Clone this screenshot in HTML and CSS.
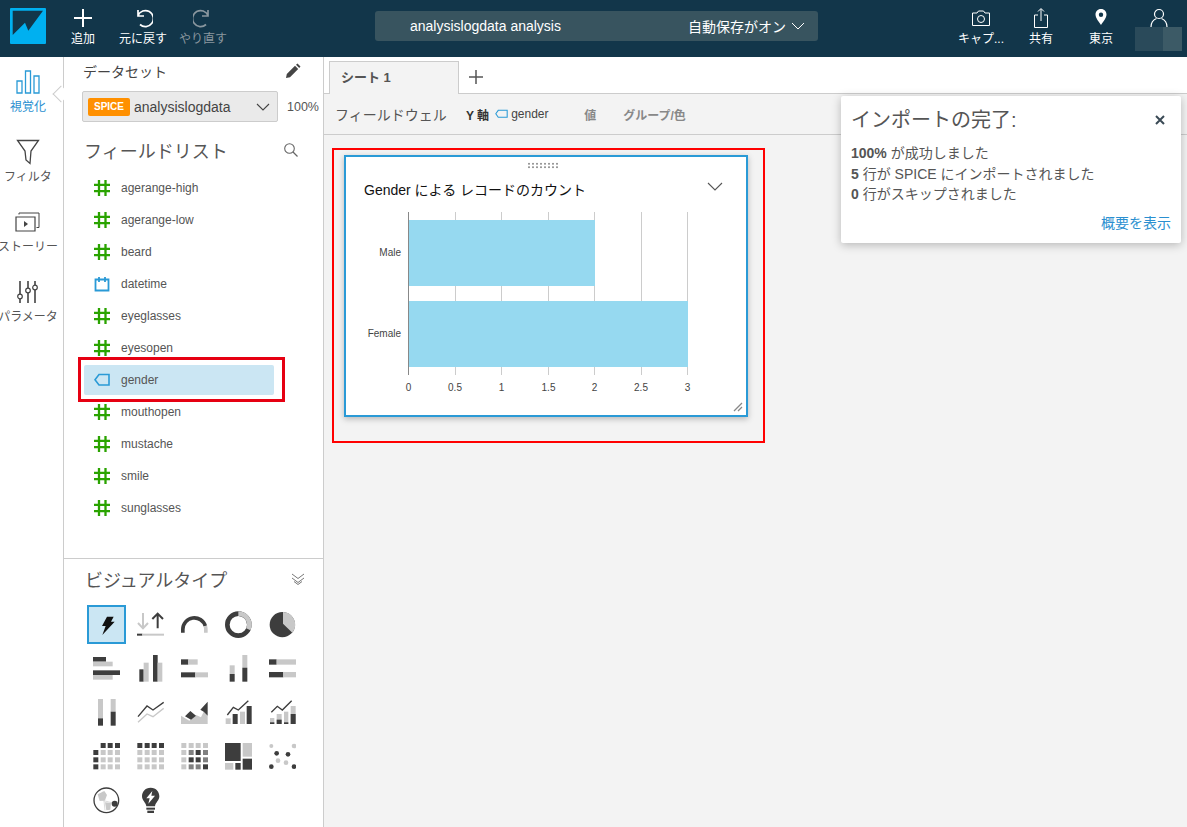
FILE: index.html
```html
<!DOCTYPE html>
<html lang="ja">
<head>
    <meta charset="UTF-8">
    <title>analysislogdata analysis</title>
    <link rel="stylesheet" href="styles.css">
</head>
<body>
    <header class="topbar">
        <div class="logo">
            <svg width="36" height="36" viewBox="0 0 36 36"><rect width="36" height="36" rx="1" fill="#00b0f0"/><path d="M2.700 2.700H33L18.300 22.700 15 14.700 2.700 27Z" fill="#12364a"/></svg>
        </div>
        <div class="tool">
            <svg width="20" height="20" viewBox="0 0 20 20"><path d="M10 1V19M1 10H19" stroke="#fff" stroke-width="2" fill="none"/></svg>
            <span>追加</span>
        </div>
        <div class="tool">
            <svg width="20" height="20" viewBox="0 0 20 20"><path d="M5 2V8H11M5 7.500A8 8 0 1 1 7 16.500" stroke="#fff" stroke-width="1.700" fill="none"/></svg>
            <span>元に戻す</span>
        </div>
        <div class="tool disabled">
            <svg width="20" height="20" viewBox="0 0 20 20"><path d="M15 2V8H9M15 7.500A8 8 0 1 0 13 16.500" stroke="#8a979f" stroke-width="1.700" fill="none"/></svg>
            <span>やり直す</span>
        </div>
        <div class="title-bar">
            <span class="title-name">analysislogdata analysis</span>
            <span class="title-save">自動保存がオン</span>
            <svg width="14" height="8" viewBox="0 0 14 8"><path d="M1 1L7 7 13 1" stroke="#fff" stroke-width="1" fill="none"/></svg>
        </div>
        <div class="tool tool-first">
            <svg width="20" height="20" viewBox="0 0 20 20"><path d="M1.500 5H6L7.500 3H12.500L14 5H18.500V17.500H1.500Z" stroke="#fff" stroke-width="1" fill="none"/><circle cx="10" cy="11" r="3.500" stroke="#fff" stroke-width="1" fill="none"/></svg>
            <span>キャプ...</span>
        </div>
        <div class="tool">
            <svg width="20" height="20" viewBox="0 0 20 20"><path d="M7 7H3.500V19.500H16.500V7H13M10 13V1M7 3.500L10 .5 13 3.500" stroke="#fff" stroke-width="1" fill="none"/></svg>
            <span>共有</span>
        </div>
        <div class="tool">
            <svg width="20" height="20" viewBox="0 0 20 20"><path fill-rule="evenodd" d="M10 1C6.500 1 4.500 3.500 4.500 6.500 4.500 10 8 14 10 17 12 14 15.500 10 15.500 6.500 15.500 3.500 13.500 1 10 1ZM10 4.500A2.200 2.200 0 1 1 10 8.900 2.200 2.200 0 0 1 10 4.500Z" fill="#fff"/></svg>
            <span>東京</span>
        </div>
        <div class="tool tool-user">
            <svg width="20" height="20" viewBox="0 0 20 20"><circle cx="10" cy="6" r="4.500" stroke="#fff" stroke-width="1.200" fill="none"/><path d="M2 19C2 14 5 11.500 7.500 10.500M18 19C18 14 15 11.500 12.500 10.500" stroke="#fff" stroke-width="1.200" fill="none"/></svg>
        </div>
        <div class="user-blur"></div>
    </header>

    <div class="page">
        <nav class="rail">
            <div class="rail-item active">
                <div class="rail-icon">
                    <svg width="26" height="24" viewBox="0 0 26 24"><path d="M2 11H7V23H2ZM10.500 1H15.500V23H10.500ZM19 6H24V23H19Z" stroke="#2a9ad6" stroke-width="1.300" fill="none"/></svg>
                </div>
                <span>視覚化</span>
            </div>
            <div class="rail-item">
                <div class="rail-icon">
                    <svg width="24" height="26" viewBox="0 0 24 26"><path d="M1.500 1.500H22.500L15 12 14 24.500 10 21 9 12Z" stroke="#444" stroke-width="1.300" fill="none"/></svg>
                </div>
                <span>フィルタ</span>
            </div>
            <div class="rail-item">
                <div class="rail-icon">
                    <svg width="26" height="22" viewBox="0 0 26 22"><path d="M1 6H20V20H1Z" stroke="#444" stroke-width="1.200" fill="none"/><path d="M4 3.500V2H24V16.500H21.500" stroke="#444" stroke-width="1" fill="none"/><path d="M9 10L13 13 9 16Z" fill="#444"/></svg>
                </div>
                <span>ストーリー</span>
            </div>
            <div class="rail-item">
                <div class="rail-icon">
                    <svg width="22" height="24" viewBox="0 0 22 24"><path d="M3 1V14M3 19V23M11 1V8M11 13V23M18 1V5M18 10V23" stroke="#444" stroke-width="1.600" fill="none"/><circle cx="3" cy="16.500" r="2.300" stroke="#444" stroke-width="1.200" fill="none"/><circle cx="11" cy="10.500" r="2.300" stroke="#444" stroke-width="1.200" fill="none"/><circle cx="18" cy="7.500" r="2.300" stroke="#444" stroke-width="1.200" fill="none"/></svg>
                </div>
                <span>パラメータ</span>
            </div>
        </nav>

        <aside class="sidebar">
            <div class="data-head">
                <span>データセット</span>
                <svg width="16" height="16" viewBox="0 0 16 16"><path d="M1 15L1.800 11 10 2.800 13.200 6 5 14.200ZM11 1.800L12.500 .5 15.500 3.500 14.200 5Z" fill="#444"/></svg>
            </div>
            <div class="data-row">
                <div class="data-select">
                    <span class="spice">SPICE</span>
                    <span class="data-name">analysislogdata</span>
                    <svg width="14" height="8" viewBox="0 0 14 8"><path d="M1 1L7 7 13 1" stroke="#444" stroke-width="1.100" fill="none"/></svg>
                </div>
                <span class="data-pct">100%</span>
            </div>
            <div class="section-head">
                <h2>フィールドリスト</h2>
                <svg class="search" width="16" height="16" viewBox="0 0 16 16"><circle cx="6.500" cy="6.500" r="4.800" stroke="#666" stroke-width="1.100" fill="none"/><path d="M10 10L14.500 14.500" stroke="#666" stroke-width="1.300"/></svg>
            </div>
            <ul class="fields">
                <li class="field"><svg width="16" height="16" viewBox="0 0 16 16"><use href="#hash"/></svg>agerange-high</li>
                <li class="field"><svg width="16" height="16" viewBox="0 0 16 16"><use href="#hash"/></svg>agerange-low</li>
                <li class="field"><svg width="16" height="16" viewBox="0 0 16 16"><use href="#hash"/></svg>beard</li>
                <li class="field"><svg width="16" height="16" viewBox="0 0 16 16"><path d="M1.500 3.500H14.500V14.500H1.500Z" stroke="#2a9ad6" stroke-width="1.800" fill="none"/><path d="M5 1V6M11 1V6" stroke="#2a9ad6" stroke-width="1.800"/></svg>datetime</li>
                <li class="field"><svg width="16" height="16" viewBox="0 0 16 16"><use href="#hash"/></svg>eyeglasses</li>
                <li class="field"><svg width="16" height="16" viewBox="0 0 16 16"><use href="#hash"/></svg>eyesopen</li>
                <li class="field selected"><svg width="16" height="16" viewBox="0 0 16 16"><use href="#tag"/></svg>gender</li>
                <li class="field"><svg width="16" height="16" viewBox="0 0 16 16"><use href="#hash"/></svg>mouthopen</li>
                <li class="field"><svg width="16" height="16" viewBox="0 0 16 16"><use href="#hash"/></svg>mustache</li>
                <li class="field"><svg width="16" height="16" viewBox="0 0 16 16"><use href="#hash"/></svg>smile</li>
                <li class="field"><svg width="16" height="16" viewBox="0 0 16 16"><use href="#hash"/></svg>sunglasses</li>
            </ul>

            <section class="visuals">
                <div class="visuals-head">
                    <h2>ビジュアルタイプ</h2>
                    <svg width="14" height="12" viewBox="0 0 14 12"><path d="M1 1L7 5.500 13 1M1 5L7 9.500 13 5M3 8.500L7 11.500 11 8.500" stroke="#777" stroke-width="1" fill="none"/></svg>
                </div>
                <div class="visual-grid">
                    <div class="visual picked"><svg viewBox="0 0 81 81"><path d="M42 17H62L54 32H65L28 72 38 45H27Z" fill="#111"/></svg></div>
                    <div class="visual"><svg viewBox="0 0 81 81"><path class="ln-lt" d="M18 6V52M3 36L18 52 33 36"/><path class="ln-dk" d="M62 52V8M46 24L62 8 78 24"/><rect class="dk" x="0" y="68" width="16" height="6"/><rect class="lt" x="16" y="68" width="66" height="6"/></svg></div>
                    <div class="visual"><svg viewBox="0 0 81 81"><path d="M5.500 65V55A34.500 34.500 0 0 1 73 45" fill="none" stroke="#3d3d3d" stroke-width="11"/><path d="M73 45A34.500 34.500 0 0 1 74.500 55V65" fill="none" stroke="#c8c8c8" stroke-width="11"/></svg></div>
                    <div class="visual"><svg viewBox="0 0 81 81"><circle cx="40" cy="41" r="33" fill="none" stroke="#3d3d3d" stroke-width="14"/><path d="M40 8A33 33 0 0 1 70 55" fill="none" stroke="#c8c8c8" stroke-width="14"/></svg></div>
                    <div class="visual"><svg viewBox="0 0 81 81"><circle cx="40" cy="41" r="38" fill="#3d3d3d"/><path d="M42 3A38 38 0 0 1 70 65L42 38Z" fill="#c8c8c8"/></svg></div>

                    <div class="visual"><svg viewBox="0 0 81 81"><rect class="dk" x="0" y="6" width="39" height="14"/><rect class="lt" x="0" y="20" width="59" height="14"/><rect class="dk" x="0" y="46" width="81" height="14"/><rect class="lt" x="0" y="60" width="59" height="14"/></svg></div>
                    <div class="visual"><svg viewBox="0 0 81 81"><rect class="dk" x="7" y="43" width="13" height="37"/><rect class="lt" x="20" y="23" width="15" height="57"/><rect class="dk" x="48" y="0" width="14" height="80"/><rect class="lt" x="62" y="23" width="14" height="57"/></svg></div>
                    <div class="visual"><svg viewBox="0 0 81 81"><rect class="dk" x="0" y="13" width="22" height="16"/><rect class="lt" x="22" y="13" width="28" height="16"/><rect class="dk" x="0" y="52" width="43" height="15"/><rect class="lt" x="43" y="52" width="38" height="15"/></svg></div>
                    <div class="visual"><svg viewBox="0 0 81 81"><rect class="lt" x="14" y="31" width="15" height="26"/><rect class="dk" x="14" y="57" width="15" height="23"/><rect class="lt" x="52" y="0" width="15" height="38"/><rect class="dk" x="52" y="38" width="15" height="42"/></svg></div>
                    <div class="visual"><svg viewBox="0 0 81 81"><rect class="dk" x="0" y="13" width="23" height="16"/><rect class="lt" x="23" y="13" width="58" height="16"/><rect class="dk" x="0" y="51" width="43" height="16"/><rect class="lt" x="43" y="51" width="38" height="16"/></svg></div>

                    <div class="visual"><svg viewBox="0 0 81 81"><rect class="lt" x="15" y="0" width="15" height="58"/><rect class="dk" x="15" y="58" width="15" height="22"/><rect class="lt" x="53" y="0" width="15" height="38"/><rect class="dk" x="53" y="38" width="15" height="42"/></svg></div>
                    <div class="visual"><svg viewBox="0 0 81 81"><path class="ln-lt thin" d="M3 70L30 45 48 53 80 28"/><path class="ln-dk thin" d="M3 53L30 21 48 33 80 10"/></svg></div>
                    <div class="visual"><svg viewBox="0 0 81 81"><path class="lt" d="M0 75V50L25 65 45 48 60 55 68 38 80 50V75Z"/><path class="dk" d="M12 52L28 36 45 50 30 62ZM58 32L80 8V50L68 38Z"/></svg></div>
                    <div class="visual"><svg viewBox="0 0 81 81"><rect class="lt" x="2" y="58" width="15" height="17"/><rect class="dk" x="23" y="45" width="15" height="30"/><rect class="lt" x="45" y="38" width="15" height="37"/><rect class="dk" x="65" y="21" width="15" height="54"/><path class="ln-dk thin" d="M7 48L25 25 40 33 70 5"/></svg></div>
                    <div class="visual"><svg viewBox="0 0 81 81"><rect class="lt" x="3" y="57" width="13" height="18"/><rect class="dk" x="3" y="70" width="13" height="5"/><rect class="lt" x="23" y="45" width="15" height="30"/><rect class="dk" x="23" y="62" width="15" height="13"/><rect class="lt" x="45" y="38" width="13" height="37"/><rect class="dk" x="45" y="70" width="13" height="5"/><rect class="lt" x="65" y="21" width="15" height="54"/><rect class="dk" x="65" y="45" width="15" height="30"/><path class="ln-dk thin" d="M7 40L25 22 40 33 68 5"/></svg></div>

                    <div class="visual"><svg viewBox="0 0 81 81"><g class="dk"><rect x="23" y="0" width="15" height="15"/><rect x="44" y="0" width="15" height="15"/><rect x="66" y="0" width="15" height="15"/><rect x="1" y="21" width="15" height="15"/><rect x="1" y="43" width="15" height="15"/><rect x="1" y="64" width="15" height="15"/></g><g class="lt"><rect x="23" y="21" width="15" height="15"/><rect x="44" y="21" width="15" height="15"/><rect x="66" y="21" width="15" height="15"/><rect x="23" y="43" width="15" height="15"/><rect x="44" y="43" width="15" height="15"/><rect x="66" y="43" width="15" height="15"/><rect x="23" y="64" width="15" height="15"/><rect x="44" y="64" width="15" height="15"/><rect x="66" y="64" width="15" height="15"/></g></svg></div>
                    <div class="visual"><svg viewBox="0 0 81 81"><g class="dk"><rect x="1" y="0" width="15" height="15"/><rect x="23" y="0" width="15" height="15"/><rect x="44" y="0" width="15" height="15"/><rect x="66" y="0" width="15" height="15"/></g><g class="lt"><rect x="1" y="21" width="15" height="15"/><rect x="23" y="21" width="15" height="15"/><rect x="44" y="21" width="15" height="15"/><rect x="66" y="21" width="15" height="15"/><rect x="1" y="43" width="15" height="15"/><rect x="23" y="43" width="15" height="15"/><rect x="44" y="43" width="15" height="15"/><rect x="66" y="43" width="15" height="15"/><rect x="1" y="64" width="15" height="15"/><rect x="23" y="64" width="15" height="15"/><rect x="44" y="64" width="15" height="15"/><rect x="66" y="64" width="15" height="15"/></g></svg></div>
                    <div class="visual"><svg viewBox="0 0 81 81"><g class="lt"><rect x="1" y="0" width="15" height="15"/><rect x="23" y="0" width="15" height="15"/><rect x="44" y="0" width="15" height="15"/><rect x="66" y="0" width="15" height="15"/><rect x="1" y="21" width="15" height="15"/><rect x="1" y="43" width="15" height="15"/><rect x="1" y="64" width="15" height="15"/></g><g class="md"><rect x="23" y="21" width="15" height="15"/><rect x="66" y="21" width="15" height="15"/><rect x="23" y="64" width="15" height="15"/><rect x="66" y="43" width="15" height="15"/><rect x="44" y="64" width="15" height="15"/></g><g class="dk"><rect x="44" y="21" width="15" height="15"/><rect x="23" y="43" width="15" height="15"/><rect x="44" y="43" width="15" height="15"/><rect x="66" y="64" width="15" height="15"/></g></svg></div>
                    <div class="visual"><svg viewBox="0 0 81 81"><rect class="dk" x="0" y="0" width="47" height="54"/><rect class="lt" x="53" y="0" width="28" height="41"/><rect class="lt" x="0" y="60" width="25" height="20"/><rect class="dk" x="31" y="60" width="16" height="20"/><rect class="dk" x="53" y="47" width="28" height="33"/></svg></div>
                    <div class="visual"><svg viewBox="0 0 81 81"><g class="lt"><circle cx="7" cy="9" r="6"/><circle cx="75" cy="9" r="7"/><circle cx="27" cy="53" r="7"/><circle cx="51" cy="59" r="7"/></g><g class="dk"><circle cx="23" cy="31" r="7"/><circle cx="57" cy="34" r="7"/><circle cx="7" cy="71" r="7"/><circle cx="75" cy="71" r="7"/></g></svg></div>

                    <div class="visual"><svg viewBox="0 0 81 81"><circle cx="40" cy="40" r="37" fill="#fff" stroke="#3d3d3d" stroke-width="4"/><path class="lt" d="M14 22L34 12 42 24 36 40 20 42Z"/><path class="lt" d="M36 46L54 48 52 68 40 70Z"/><path d="M20 38L60 48M30 14L36 70" stroke="#c8c8c8" stroke-width="2"/><circle class="dk" cx="65" cy="50" r="9"/></svg></div>
                    <div class="visual"><svg viewBox="0 0 81 81"><path class="dk" d="M41 2C24 2 15 15 15 28 15 41 26 46 28 58H54C56 46 67 41 67 28 67 15 58 2 41 2Z"/><path d="M46 12L28 34H38L34 50 54 26H43Z" fill="#fff"/><rect class="dk" x="28" y="62" width="26" height="6"/><rect class="dk" x="31" y="71" width="20" height="7"/></svg></div>
                </div>
            </section>
        </aside>

        <main class="main">
            <div class="tabs">
                <div class="tab">シート 1</div>
                <svg class="tab-add" width="14" height="14" viewBox="0 0 14 14"><path d="M7 0V14M0 7H14" stroke="#555" stroke-width="1.500"/></svg>
            </div>
            <div class="wells">
                <span class="wells-title">フィールドウェル</span>
                <span class="well-label">Y 軸</span>
                <svg width="13" height="12" viewBox="0 0 16 12"><path d="M4 1.500H15V10H4L1 5.700Z" stroke="#2a9ad6" stroke-width="1.300" fill="none"/></svg>
                <span class="well-value">gender</span>
                <span class="well-label muted first">値</span>
                <span class="well-label muted">グループ/色</span>
            </div>
            <div class="canvas">
                <div class="panel">
                    <div class="grip"></div>
                    <div class="panel-head">
                        <span>Gender による レコードのカウント</span>
                        <svg width="16" height="10" viewBox="0 0 16 10"><path d="M1 1L8 8 15 1" stroke="#555" stroke-width="1.100" fill="none"/></svg>
                    </div>
                    <svg class="chart" width="400" height="195" viewBox="0 0 400 195">
                        <g stroke="#ccc" stroke-width="1">
                            <path d="M109.500 5V168M155.500 5V168M202.500 5V168M248.500 5V168M295.500 5V168M341.500 5V168"/>
                        </g>
                        <rect x="63" y="13" width="186" height="66" fill="#96d9f0"/>
                        <rect x="63" y="94" width="279" height="66" fill="#96d9f0"/>
                        <path d="M62.500 5V168" stroke="#888" stroke-width="1"/>
                        <g class="chart-text" text-anchor="end">
                            <text x="55" y="48.500">Male</text>
                            <text x="55" y="129.500">Female</text>
                        </g>
                        <g class="chart-text" text-anchor="middle">
                            <text x="62.500" y="184">0</text>
                            <text x="109" y="184">0.5</text>
                            <text x="155.500" y="184">1</text>
                            <text x="202.500" y="184">1.5</text>
                            <text x="248.500" y="184">2</text>
                            <text x="295" y="184">2.5</text>
                            <text x="341.500" y="184">3</text>
                        </g>
                    </svg>
                    <svg class="resize" width="10" height="10" viewBox="0 0 10 10"><path d="M1 9L9 1M5 9L9 5" stroke="#888" stroke-width="1.300"/></svg>
                </div>
            </div>
        </main>
    </div>

    <div class="toast">
        <div class="toast-head">
            <h3>インポートの完了:</h3>
            <svg width="10" height="10" viewBox="0 0 10 10"><path d="M1 1L9 9M9 1L1 9" stroke="#3a4a55" stroke-width="2"/></svg>
        </div>
        <p><b>100%</b> が成功しました</p>
        <p><b>5</b> 行が SPICE にインポートされました</p>
        <p><b>0</b> 行がスキップされました</p>
        <a class="toast-link">概要を表示</a>
    </div>

    <div class="mark mark-chart"></div>
    <div class="mark mark-field"></div>

    <svg class="defs" width="0" height="0">
        <defs>
            <g id="hash"><path d="M5 0V16M11.500 0V16M0 4.800H16M0 11.200H16" stroke="#2aa300" stroke-width="2.300" fill="none"/></g>
            <g id="tag"><path d="M5 2.500H15V13H5L1 7.700Z" stroke="#2a9ad6" stroke-width="1.600" fill="none"/></g>
        </defs>
    </svg>
</body>
</html>
```

FILE: styles.css
```css
* {
    box-sizing: border-box;
}
html, body {
    height: 100%;
}
body {
    margin: 0;
    position: relative;
    overflow: hidden;
    font-family: "Liberation Sans", "Noto Sans CJK JP", sans-serif;
    color: #555;
    background: #fff;
}
h2, h3, p, ul {
    margin: 0;
    padding: 0;
}
.defs {
    position: absolute;
}

/* top bar */
.topbar {
    display: flex;
    height: 57px;
    background: #12364a;
    color: #fff;
    position: relative;
}
.logo {
    width: 36px;
    margin: 8px 7px 0 10px;
}
.logo svg {
    display: block;
}
.tool {
    width: 60px;
    display: flex;
    flex-direction: column;
    align-items: center;
    padding-top: 8px;
    font-size: 12px;
    line-height: 16px;
    white-space: nowrap;
}
.tool span {
    margin-top: 3px;
}
.tool.disabled {
    color: #8a979f;
}
.tool-first {
    margin-left: auto;
}
.tool-user {
    width: 56px;
}
.title-bar {
    width: 443px;
    height: 30px;
    margin: 11px 0 0 142px;
    padding: 0 13px 0 35px;
    display: flex;
    align-items: center;
    background: #38545f;
    border-radius: 3px;
    font-size: 14px;
}
.title-name {
    flex: 1;
}
.title-save {
    margin-right: 5px;
}
.user-blur {
    position: absolute;
    left: 1135px;
    top: 27px;
    width: 47px;
    height: 24px;
    background: linear-gradient(90deg, #2a4a5a 0, #2a4a5a 60%, #3c5a66 60%);
}

/* layout */
.page {
    display: flex;
    height: 770px;
}
.rail {
    width: 64px;
    flex: none;
    padding-top: 8px;
    border-right: 1px solid #ccc;
}
.rail-item {
    position: relative;
    width: 56px;
    height: 70px;
    display: flex;
    flex-direction: column;
    align-items: center;
    font-size: 12px;
    line-height: 16px;
    white-space: nowrap;
}
.rail-item.active {
    color: #2a8fd0;
}
.rail-item.active::after {
    content: "";
    position: absolute;
    left: 55px;
    top: 23px;
    width: 11px;
    height: 11px;
    background: #fff;
    border-left: 1px solid #ccc;
    border-bottom: 1px solid #ccc;
    transform: rotate(45deg);
}
.rail-icon {
    height: 34px;
    display: flex;
    align-items: center;
}
.rail-icon svg {
    display: block;
}

/* sidebar */
.sidebar {
    width: 260px;
    flex: none;
    display: flex;
    flex-direction: column;
    border-right: 1px solid #ccc;
    background: #fff;
    position: relative;
}
.data-head {
    height: 28px;
    padding: 0 22px 0 19px;
    display: flex;
    align-items: center;
    justify-content: space-between;
    font-size: 14px;
    color: #444;
}
.data-row {
    display: flex;
    align-items: center;
    margin: 6px 0 0 18px;
}
.data-select {
    width: 196px;
    height: 31px;
    padding: 0 7px 0 5px;
    display: flex;
    align-items: center;
    background: #eaeaea;
    border: 1px solid #ccc;
    border-radius: 2px;
}
.spice {
    width: 42px;
    height: 18px;
    margin-right: 4px;
    background: #ff9000;
    border-radius: 2px;
    color: #fff;
    font-size: 10px;
    font-weight: bold;
    line-height: 18px;
    text-align: center;
}
.data-name {
    flex: 1;
    font-size: 14px;
    color: #444;
}
.data-pct {
    margin-left: 9px;
    font-size: 12.500px;
}
.section-head {
    height: 30px;
    margin-top: 13px;
    padding: 0 24px 0 20px;
    display: flex;
    align-items: center;
    justify-content: space-between;
}
h2 {
    font-size: 18px;
    font-weight: 400;
    color: #555;
}
.fields {
    list-style: none;
    margin-top: 7px;
    flex: 1;
}
.field {
    width: 190px;
    height: 30px;
    margin: 1px 0 2px 20px;
    padding-left: 10px;
    display: flex;
    align-items: center;
    gap: 11px;
    font-size: 12px;
    border-radius: 2px;
}
.field.selected {
    background: #cbe6f3;
}
.visuals {
    height: 269px;
    flex: none;
    padding: 9px 0 0 23px;
    border-top: 1px solid #ccc;
}
.visuals-head {
    display: flex;
    align-items: center;
    justify-content: space-between;
    width: 220px;
    margin-left: -2px;
    height: 22px;
}
.visual-grid {
    display: grid;
    grid-template-columns: repeat(5, 44px);
    grid-auto-rows: 44px;
    margin-top: 15px;
}
.visual {
    width: 39px;
    height: 39px;
    display: flex;
    align-items: center;
    justify-content: center;
}
.visual svg {
    display: block;
    width: 27px;
    height: 27px;
}
.visual.picked {
    background: #cbe6f3;
    border: 2px solid #2a9ad6;
}
.dk {
    fill: #3d3d3d;
}
.lt {
    fill: #c8c8c8;
}
.md {
    fill: #808080;
}
.ln-dk, .ln-lt {
    fill: none;
    stroke-width: 6;
}
.ln-dk {
    stroke: #3d3d3d;
}
.ln-lt {
    stroke: #c8c8c8;
}
.thin {
    stroke-width: 4;
}

/* main area */
.main {
    flex: 1;
    display: flex;
    flex-direction: column;
    background: #f3f3f3;
}
.tabs {
    height: 37px;
    flex: none;
    display: flex;
    align-items: flex-end;
    padding-left: 5px;
    background: #fff;
    border-bottom: 1px solid #ccc;
}
.tab {
    width: 130px;
    height: 33px;
    margin-bottom: -1px;
    padding-left: 11px;
    background: #f3f3f3;
    border: 1px solid #ccc;
    border-bottom: 0;
    font-size: 13px;
    font-weight: bold;
    line-height: 31px;
}
.tab-add {
    margin: 0 0 9px 10px;
}
.wells {
    height: 41px;
    flex: none;
    display: flex;
    align-items: center;
    padding-left: 11px;
    border-bottom: 1px solid #ccc;
}
.wells-title {
    font-size: 14px;
    width: 131px;
}
.well-label {
    font-size: 12px;
    font-weight: bold;
    color: #333;
}
.well-label + svg {
    margin: 0 3px 0 6px;
}
.well-value {
    font-size: 12px;
    width: 73px;
    color: #444;
}
.well-label.muted {
    color: #888;
}
.well-label.first {
    width: 39px;
}
.canvas {
    flex: 1;
    padding: 20px;
}
.panel {
    position: relative;
    width: 404px;
    height: 262px;
    background: #fff;
    border: 2px solid #2a9ad6;
    box-shadow: 0 2px 6px rgba(0, 0, 0, 0.25);
}
.grip {
    width: 31px;
    height: 7px;
    margin: 5px 0 0 181px;
    background: radial-gradient(circle, #999 1px, transparent 1.200px) 0 0 / 4px 3.500px;
}
.panel-head {
    height: 38px;
    padding: 0 23px 0 18px;
    display: flex;
    align-items: flex-start;
    justify-content: space-between;
    color: #111;
    font-size: 14px;
    line-height: 20px;
}
.panel-head span {
    margin-top: 11px;
}
.panel-head svg {
    margin-top: 13px;
}
.chart {
    display: block;
}
.chart-text {
    font-size: 10px;
    fill: #444;
}
.resize {
    position: absolute;
    right: 3px;
    bottom: 3px;
}

/* import toast */
.toast {
    position: absolute;
    left: 841px;
    top: 96px;
    width: 340px;
    height: 147px;
    padding: 12px 16px 0 10px;
    background: #fff;
    border-radius: 2px;
    box-shadow: 0 2px 10px rgba(0, 0, 0, 0.25);
    font-size: 14px;
    line-height: 20.500px;
}
.toast-head {
    display: flex;
    align-items: center;
    justify-content: space-between;
    height: 24px;
    margin-bottom: 11px;
}
h3 {
    font-size: 20px;
    font-weight: 400;
    color: #555;
}
.toast-link {
    display: block;
    margin: 8px -6px 0 0;
    text-align: right;
    color: #2a8fd0;
}

/* red annotations */
.mark {
    position: absolute;
    border: 2px solid #f00;
}
.mark-chart {
    left: 332px;
    top: 148px;
    width: 433px;
    height: 295px;
}
.mark-field {
    left: 78px;
    top: 357px;
    width: 207px;
    height: 45px;
    border-width: 3px;
    border-color: #e60012;
}
```
